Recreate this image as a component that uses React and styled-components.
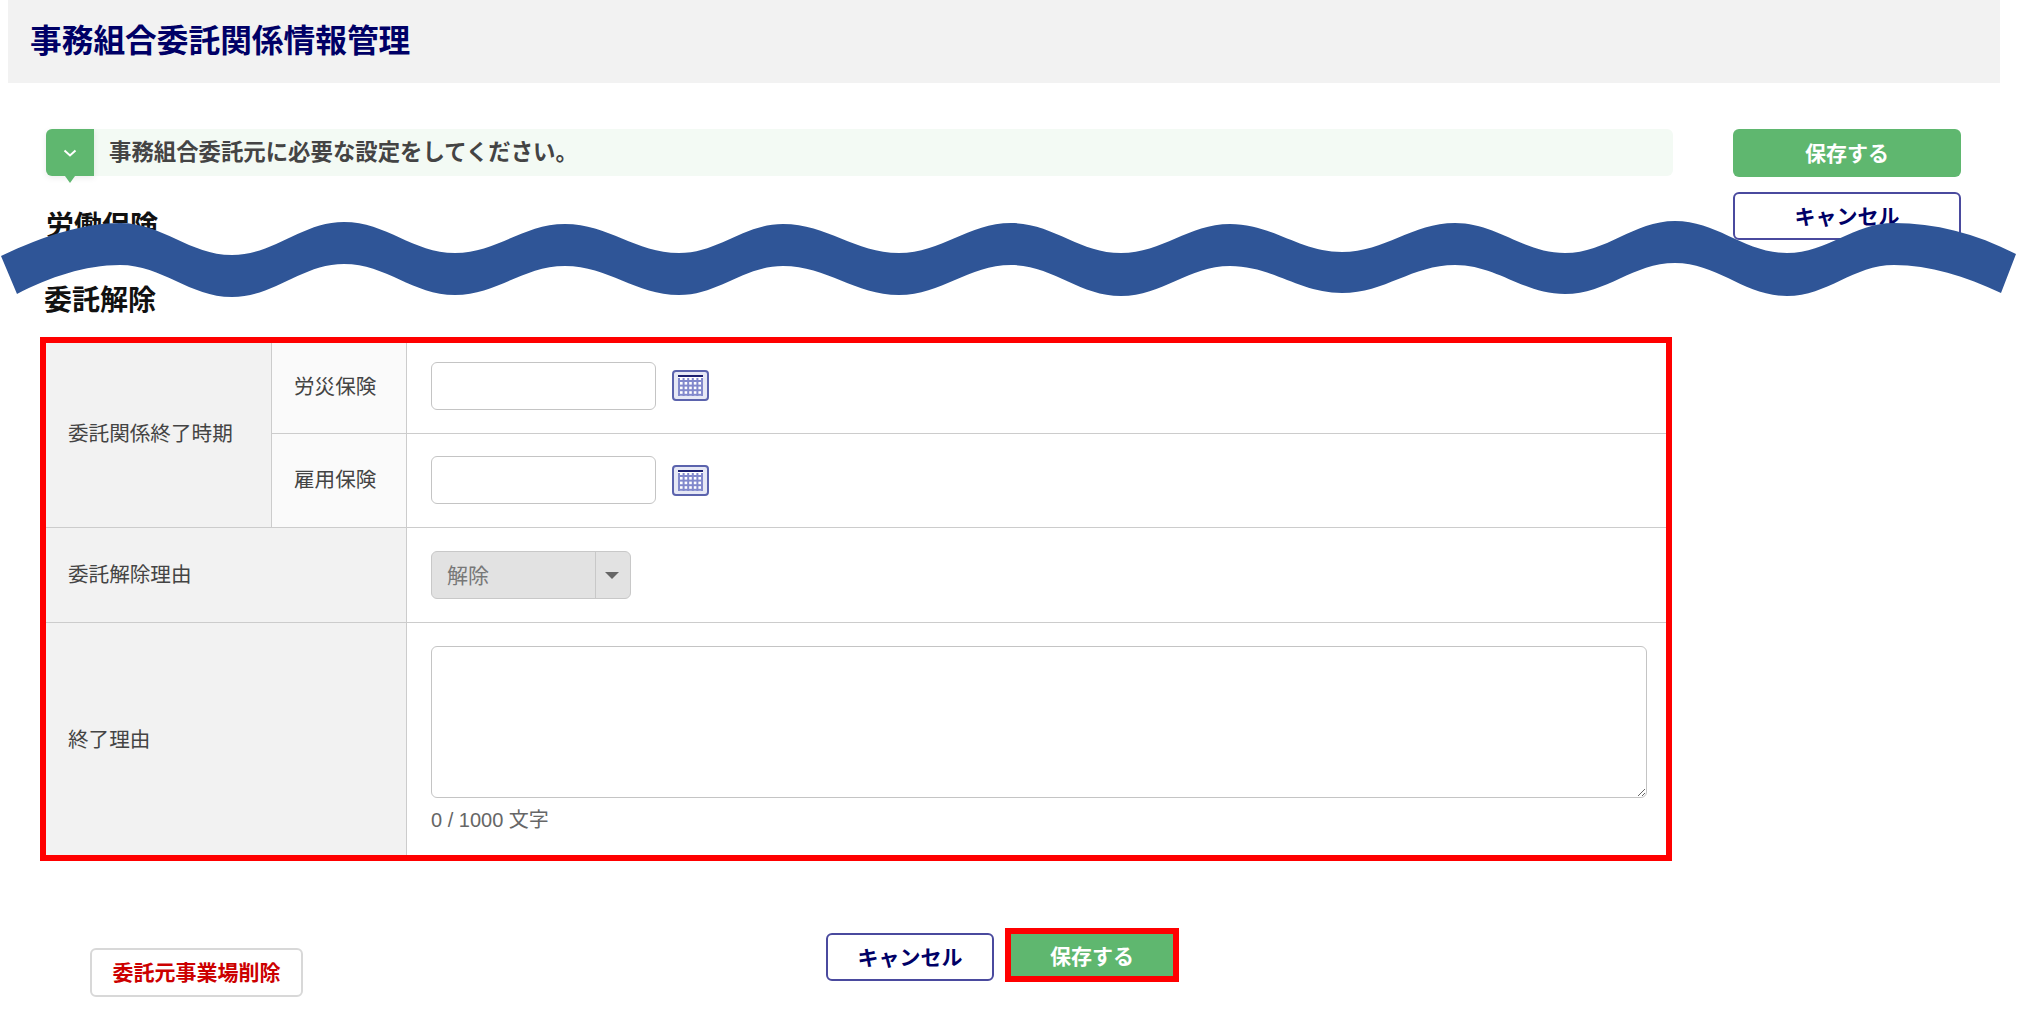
import React from "react";
import styled, { createGlobalStyle } from "styled-components";

const Global = createGlobalStyle`
  html, body { margin: 0; padding: 0; background: #fff; }
  body {
    font-family: "Liberation Sans", "Noto Sans CJK JP", sans-serif;
    font-size: 20px;
    color: #333;
  }
  * { box-sizing: border-box; }
`;

const Page = styled.div`
  position: relative;
  width: 2017px;
  height: 1010px;
  overflow: hidden;
`;

const Header = styled.header`
  margin: 0 17px 0 8px;
  height: 83px;
  padding-left: 22px;
  background: #f2f2f2;
  display: flex;
  align-items: center;
`;

const Title = styled.h1`
  margin: 0;
  font-size: 31.7px;
  font-weight: 700;
  color: #000066;
  line-height: 1;
`;

const Body = styled.div`
  display: flex;
  padding: 46px 0 0 40px;
  gap: 61px;
`;

const MainCol = styled.main`
  width: 1632px;
`;

const SideCol = styled.aside`
  width: 228px;
  display: flex;
  flex-direction: column;
  gap: 15px;
`;

const Banner = styled.div`
  position: relative;
  margin-left: 6px;
  width: 1627px;
  height: 47px;
  background: #f3faf4;
  border-radius: 6px;
  display: flex;
  align-items: center;
`;

const BannerToggle = styled.div`
  position: relative;
  width: 48px;
  height: 47px;
  background: #5fb76f;
  border-radius: 6px 0 0 6px;
  display: flex;
  align-items: center;
  justify-content: center;
  box-shadow: 0 2px 6px rgba(0, 0, 0, 0.08);
  &::after {
    content: "";
    position: absolute;
    left: 19px;
    bottom: -7px;
    border-left: 5px solid transparent;
    border-right: 5px solid transparent;
    border-top: 7px solid #5fb76f;
  }
`;

const BannerText = styled.span`
  margin-left: 15px;
  font-size: 22.4px;
  font-weight: 700;
  color: #444;
  padding-bottom: 6px;
`;

const SectionHeading = styled.h2`
  margin: ${(p) => p.$top}px 0 0 ${(p) => p.$left}px;
  font-size: 28px;
  font-weight: 700;
  color: #111;
  line-height: 40px;
`;

const Frame = styled.div`
  margin-top: ${(p) => p.$top}px;
  border: 6px solid #ff0000;
  width: 1632px;
  height: 524px;
`;

const Grid = styled.div`
  display: grid;
  height: 100%;
  grid-template-columns: 226px 135px 1fr;
  grid-template-rows: 91px 94px 95px 1fr;
`;

const Label = styled.div`
  grid-column: ${(p) => p.$col};
  grid-row: ${(p) => p.$row};
  background: ${(p) => (p.$light ? "#fafafa" : "#f2f2f2")};
  padding-left: 22px;
  display: flex;
  align-items: center;
  font-size: 20.6px;
  color: #444;
  border-right: 1px solid #ccc;
  border-bottom: ${(p) => (p.$last ? "none" : "1px solid #ccc")};
  padding-bottom: ${(p) => p.$lift}px;
`;

const Cell = styled.div`
  grid-column: 3;
  grid-row: ${(p) => p.$row};
  padding: 0 19px 0 24px;
  display: flex;
  align-items: center;
  gap: 16px;
  border-bottom: ${(p) => (p.$last ? "none" : "1px solid #ccc")};
`;

const TextInput = styled.input`
  width: 225px;
  height: 48px;
  border: 1px solid #c4c4c4;
  border-radius: 6px;
  background: #fff;
  margin-bottom: ${(p) => p.$shift}px;
`;

const CalendarSvg = styled.svg`
  flex: none;
  margin-bottom: ${(p) => p.$shift}px;
`;

const SelectBox = styled.div`
  width: 200px;
  height: 48px;
  border: 1px solid #c8c8c8;
  border-radius: 6px;
  background: #e2e2e2;
  display: flex;
  align-items: center;
  justify-content: space-between;
  color: #777;
  font-size: 21px;
  padding-left: 15px;
`;

const SelectValue = styled.span`
  padding-bottom: 3px;
`;

const SelectArrow = styled.span`
  width: 35px;
  height: 100%;
  padding-right: 3px;
  border-left: 1px solid #c8c8c8;
  display: flex;
  align-items: center;
  justify-content: center;
  &::before {
    content: "";
    border-left: 7px solid transparent;
    border-right: 7px solid transparent;
    border-top: 7px solid #666;
  }
`;

const AreaWrap = styled.div`
  flex: 1;
  align-self: flex-start;
  padding-top: 23px;
`;

const TextArea = styled.textarea`
  display: block;
  width: 100%;
  height: 152px;
  border: 1px solid #c4c4c4;
  border-radius: 6px;
  background: #fff;
`;

const Counter = styled.div`
  margin-top: 8px;
  font-size: 20px;
  line-height: 28px;
  color: #666;
`;

const Button = styled.button`
  font-family: inherit;
  font-weight: 700;
  font-size: 21px;
  padding: 0 0 3px;
  border-radius: 6px;
  display: flex;
  align-items: center;
  justify-content: center;
  cursor: pointer;
`;

const SaveButton = styled(Button)`
  width: 228px;
  height: 48px;
  background: #5fb76f;
  border: 0;
  color: #fff;
`;

const CancelButton = styled(Button)`
  width: ${(p) => p.$w}px;
  height: 48px;
  background: #fff;
  border: 2px solid #4a4a9e;
  color: #000066;
`;

const Footer = styled.footer`
  display: flex;
  align-items: flex-start;
  padding: 67px 0 0 90px;
`;

const DeleteButton = styled(Button)`
  margin: 20px 523px 0 0;
  width: 213px;
  height: 49px;
  background: #fff;
  border: 2px solid #d8d8d8;
  color: #cc0000;
  padding-bottom: 4px;
`;

const FooterCancel = styled(CancelButton)`
  margin: 5px 11px 0 0;
`;

const FooterSave = styled(Button)`
  width: 174px;
  height: 54px;
  border: 6px solid #ff0000;
  border-radius: 0;
  background: #5fb76f;
  color: #fff;
  padding-bottom: 1px;
`;

const WaveSvg = styled.svg`
  position: absolute;
  left: 0;
  top: 0;
  pointer-events: none;
`;

const waveX = [120, 232, 344, 455, 565, 679, 783, 899, 1011, 1121, 1230, 1342, 1455, 1565, 1675, 1787, 1894];
const waveTop = [223, 255, 222, 253, 224, 253, 224, 253, 223, 253, 224, 252, 223, 253, 221, 253, 223];
const waveBottom = [265, 297, 264, 295, 266, 295, 266, 295, 265, 296, 266, 293, 265, 294, 263, 296, 265];

function waveEdge(ys, reverse) {
  let d = "";
  if (!reverse) {
    for (let i = 1; i < waveX.length; i++) {
      const k = (waveX[i] - waveX[i - 1]) * 0.38;
      d += ` C ${waveX[i - 1] + k} ${ys[i - 1]}, ${waveX[i] - k} ${ys[i]}, ${waveX[i]} ${ys[i]}`;
    }
  } else {
    for (let i = waveX.length - 1; i > 0; i--) {
      const k = (waveX[i] - waveX[i - 1]) * 0.38;
      d += ` C ${waveX[i] - k} ${ys[i]}, ${waveX[i - 1] + k} ${ys[i - 1]}, ${waveX[i - 1]} ${ys[i - 1]}`;
    }
  }
  return d;
}

function wavePath() {
  return (
    "M1 256 C 45 235, 85 223, 120 223" +
    waveEdge(waveTop, false) +
    " C 1935 223, 1975 233, 2016 254 L 2001 293 C 1965 276, 1930 265, 1894 265" +
    waveEdge(waveBottom, true) +
    " C 85 265, 50 277, 17 294 Z"
  );
}

const CalendarIcon = ({ shift }) => (
  <CalendarSvg $shift={shift} width="37" height="31" viewBox="0 0 37 31">
    <rect x="1" y="1" width="35" height="29" rx="3" fill="#e6e8f5" stroke="#5b63ad" strokeWidth="2" />
    <rect x="6" y="5" width="25" height="2" fill="#1c2070" />
    <rect x="6" y="7" width="25" height="19" fill="#fff" />
    {[0, 1, 2, 3, 4, 5].map((i) => (
      <rect key={`v${i}`} x={6 + i * 4.6} y="8" width="2" height="18" fill="#8289cc" />
    ))}
    {[0, 1, 2, 3].map((i) => (
      <rect key={`h${i}`} x="6" y={10 + i * 4.6} width="25" height="2" fill="#8289cc" />
    ))}
  </CalendarSvg>
);

export default function App() {
  return (
    <Page>
      <Global />
      <Header>
        <Title>事務組合委託関係情報管理</Title>
      </Header>
      <Body>
        <MainCol>
          <Banner>
            <BannerToggle>
              <svg width="16" height="16" viewBox="0 0 16 16">
                <path d="M2.5 5.5L8 10.5L13.5 5.5" fill="none" stroke="#fff" strokeWidth="2" />
              </svg>
            </BannerToggle>
            <BannerText>事務組合委託元に必要な設定をしてください。</BannerText>
          </Banner>
          <SectionHeading $top={31} $left={6}>労働保険</SectionHeading>
          <SectionHeading $top={34} $left={4}>委託解除</SectionHeading>
          <Frame $top={16}>
            <Grid>
              <Label $col="1" $row="1 / span 2" $lift={6}>委託関係終了時期</Label>
              <Label $col="2" $row="1" $lift={6} $light>労災保険</Label>
              <Cell $row="1">
                <TextInput $shift={4} />
                <CalendarIcon shift={5} />
              </Cell>
              <Label $col="2" $row="2" $lift={6} $light>雇用保険</Label>
              <Cell $row="2">
                <TextInput $shift={1} />
                <CalendarIcon shift={0} />
              </Cell>
              <Label $col="1 / span 2" $row="3" $lift={4}>委託解除理由</Label>
              <Cell $row="3">
                <SelectBox>
                  <SelectValue>解除</SelectValue>
                  <SelectArrow />
                </SelectBox>
              </Cell>
              <Label $col="1 / span 2" $row="4" $lift={2} $last>終了理由</Label>
              <Cell $row="4" $last>
                <AreaWrap>
                  <TextArea />
                  <Counter>0 / 1000 文字</Counter>
                </AreaWrap>
              </Cell>
            </Grid>
          </Frame>
        </MainCol>
        <SideCol>
          <SaveButton>保存する</SaveButton>
          <CancelButton $w={228}>キャンセル</CancelButton>
        </SideCol>
      </Body>
      <Footer>
        <DeleteButton>委託元事業場削除</DeleteButton>
        <FooterCancel $w={168}>キャンセル</FooterCancel>
        <FooterSave>保存する</FooterSave>
      </Footer>
      <WaveSvg width="2017" height="1010" viewBox="0 0 2017 1010">
        <path d={wavePath()} fill="#2f5597" />
      </WaveSvg>
    </Page>
  );
}
